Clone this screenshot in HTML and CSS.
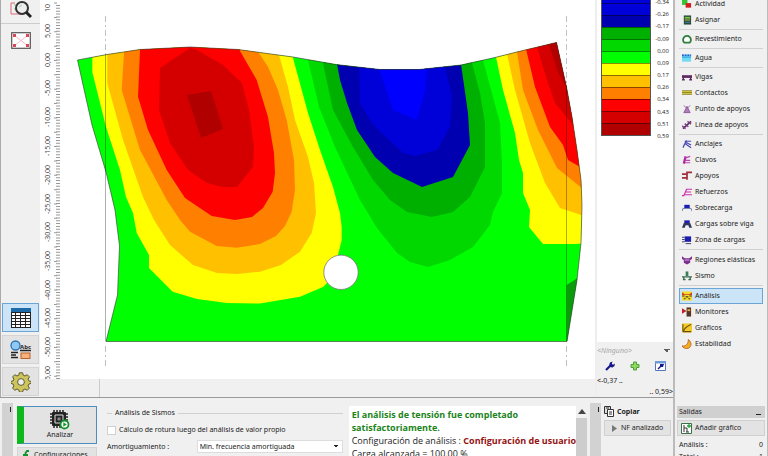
FILE: index.html
```html
<!DOCTYPE html>
<html lang="es">
<head>
<meta charset="utf-8">
<title>Análisis</title>
<link rel="stylesheet" href="styles.css">
</head>
<body>
<div class="app">
  <main class="main">
    <section class="workspace">
      <nav class="tools">
        <button class="tool" aria-label="Zoom">
          <svg width="22" height="20" viewBox="0 0 22 20"><path d="M5 3H1v11h13v-2" fill="none" stroke="#e06a78"/><path d="M4 5h4M4 9h4" stroke="#8fc79a"/><circle cx="12" cy="8" r="6" fill="#eee" stroke="#333" stroke-width="2"/><path d="M9 7l3-2" stroke="#9cc7a4"/><path d="M16 12l5 5" stroke="#222" stroke-width="3"/></svg>
        </button>
        <hr class="tool-line">
        <button class="tool" aria-label="Ajustar vista">
          <svg width="20" height="17" viewBox="0 0 20 17"><rect x=".7" y=".7" width="18.6" height="15.6" fill="#fff" stroke="#555" stroke-width="1.2"/><path d="M3 3l5 4M17 3l-5 4M3 14l5-4M17 14l-5-4M8 7l4 3M12 7l-4 3" stroke="#f0aab2" stroke-width=".8"/><path d="M2 2h3v3H2zM18 2h-3v3h3zM2 15h3v-3H2zM18 15h-3v-3h3z" fill="#d8485a"/></svg>
        </button>
        <div class="tool-tabs">
          <button class="tab tab-on" aria-label="Tabla">
            <svg width="20" height="20" viewBox="0 0 20 20"><path d="M0 0h20v20H0z" fill="#222"/><path d="M0 0h20v4H0z" fill="#1c6aa8"/><path d="M1 5h3v2H1zM5 5h4v2H5zM10 5h4v2h-4zM15 5h4v2h-4zM1 8h3v2H1zM5 8h4v2H5zM10 8h4v2h-4zM15 8h4v2h-4zM1 11h3v2H1zM5 11h4v2H5zM10 11h4v2h-4zM15 11h4v2h-4zM1 14h3v2H1zM5 14h4v2H5zM10 14h4v2h-4zM15 14h4v2h-4zM1 17h3v2H1zM5 17h4v2H5zM10 17h4v2h-4zM15 17h4v2h-4z" fill="#fff"/></svg>
          </button>
          <button class="tab" aria-label="Dibujo">
            <svg width="22" height="20" viewBox="0 0 22 20"><circle cx="5.500" cy="5.500" r="4.500" fill="#8fc8f4" stroke="#2a76b4" stroke-width="1.300"/><path d="M1 12.500h7M1 15h5M1 17.500h7M10 10.500h11" stroke="#222" stroke-width="1.500"/><rect x="11" y="13" width="9" height="5.500" fill="#f8b07c" stroke="#b5632a"/><text x="10" y="8.500" class="abc">Abc</text></svg>
          </button>
          <button class="tab" aria-label="Configuración">
            <svg width="20" height="20" viewBox="-10 -10 20 20"><path d="M-1.600-9.200h3.200l.6 2.400 1.800.8 2.200-1.300 2.200 2.200-1.300 2.200.8 1.800 2.400.6v1.800l-2.400.8-.8 1.800 1.300 2.200-2.200 2.200-2.200-1.300-1.800.8-.6 2.400h-3.200l-.6-2.400-1.800-.8-2.200 1.300-2.200-2.200 1.300-2.200-.8-1.800-2.400-.8v-1.800l2.400-.6.8-1.800-1.300-2.200 2.200-2.200 2.200 1.300 1.800-.8z" fill="#cdc45c" stroke="#5d5a2c"/><circle r="3.400" fill="#eee" stroke="#5d5a2c"/></svg>
          </button>
        </div>
      </nav>

      <div class="view">
        <svg class="plot" viewBox="40 0 555 379" role="img" aria-label="Isolíneas">
          <defs>
            <clipPath id="body"><path d="M77.500 60L107 54.500 140 49.500 190 47 238 49.500 293 57 336 64.500 380 69.500H419L461 65 495 57.500 525 50 556.500 42.500 566.500 87 572 117 577 150 581 180 582 205 581 243 577 280 567 341.500H106L117.500 295 119.500 246 115 210 106 172 92 125z"/></clipPath>
          </defs>
          <g class="ruler">
            <path d="M58 5V379" stroke-width="4" stroke-dasharray="1 1.870"/>
            <path d="M55.500 2.600V379" stroke-width="3" stroke-dasharray="1 13.350"/>
            <g class="marks">
              <text transform="translate(50 8) rotate(-90)">10</text>
              <text transform="translate(50 31) rotate(-90)">5,00</text>
              <text transform="translate(50 60) rotate(-90)">0,00</text>
              <text transform="translate(50 88) rotate(-90)">-5,00</text>
              <text transform="translate(50 117) rotate(-90)">-10,00</text>
              <text transform="translate(50 146) rotate(-90)">-15,00</text>
              <text transform="translate(50 175) rotate(-90)">-20,00</text>
              <text transform="translate(50 204) rotate(-90)">-25,00</text>
              <text transform="translate(50 232) rotate(-90)">-30,00</text>
              <text transform="translate(50 261) rotate(-90)">-35,00</text>
              <text transform="translate(50 290) rotate(-90)">-40,00</text>
              <text transform="translate(50 318) rotate(-90)">-45,00</text>
              <text transform="translate(50 347) rotate(-90)">-50,00</text>
              <text transform="translate(50 373) rotate(-90)">5,00</text>
            </g>
          </g>
          <g clip-path="url(#body)">
            <path d="M60 30H600V360H60z" fill="#00ff00"/>
            <path d="M92.300 40V72L106 127 120 170 126 197 133 213 136.700 233 149 255V268L172.700 291.700 197 299 227 303 260 303.500 300 296.700 323 287 338 272V255L341.700 240V227L340 213 333 187 320 150 308 113 293 58V40z" fill="#ffff00"/>
            <path d="M107.300 40V83L123 140 143 197 154 220 170 245 193 265 217 273 237 274 260 271.700 281 265 300 251.700 311.700 233 316 213 314 183 308 157 295 120 288 87 279 55V40z" fill="#ffc000"/>
            <path d="M124 40V53L121.700 90 140 150 166.700 200 180 220 190 231.700 216.700 246 236.700 247.700 260 244 276 236 285 226 291.700 211.700 295 190 294 160 286.700 120 278 90 268 66.700 258 51.700V40z" fill="#ff8000"/>
            <path d="M140 40V50L138 96.700 148 130 166.700 170 185 198 211.700 216 235 220 252 217 263 208 272.700 191.700 275 173 274 153 268 117 256.700 80 240 51V40z" fill="#ff0000"/>
            <path d="M190 48L160 68 159 110 170 143 188 170 207 183 222 187H237L253 167 254 147 249 110 242 83 223 65 197 50z" fill="#d40000"/>
            <path d="M187 95L211 91 223 129 201 138z" fill="#b00000"/>
            <path d="M308 40V60L319 107 335 147 360 200 377 228 397 253 410 262 428 267 450 260 473 247 490 225 493 212 502 193V163L500 123 483 60V40z" fill="#00d800"/>
            <path d="M323 40V63L333 110 353 147 373 180 390 200 407 212 432 217 453 212 470 197 485 167V123L480 93 472 63V40z" fill="#00b000"/>
            <path d="M337 40V64L340 80 347 103 357 130 375 157 393 173 422 187 453 177 470 145 468 113 461 64V40z" fill="#0000b0"/>
            <path d="M359 40L360 103 373 125 403 153 415 156 437 150 450 127 452 97 445 66V40z" fill="#0000d8"/>
            <path d="M379 40V69L393 110 417 120 425 90 427 69V40z" fill="#0000ff"/>
            <path d="M496 40V57L503 90 515 133 519 160 523 173V193L530 210 529 227 543 244H575L600 242V40z" fill="#ffff00"/>
            <path d="M507 40V54L515 90 530 143 545 183 560 208 600 221V40z" fill="#ffc000"/>
            <path d="M517 40V52L523 90 538 130 557 168 600 203V40z" fill="#ff8000"/>
            <path d="M526 40V49L535 87 550 127 563 145 568 160 600 178V40z" fill="#ff0000"/>
            <path d="M537 40V47L547 80 555 103 573 125 600 100V40z" fill="#d40000"/>
            <path d="M549 40V45L558 72 566 87 600 90V40z" fill="#b00000"/>
            <path d="M566.700 285L590 270V345H566.700z" fill="#0a9c0a"/>
          </g>
          <path class="outline" d="M77.500 60L107 54.500 140 49.500 190 47 238 49.500 293 57 336 64.500 380 69.500H419L461 65 495 57.500 525 50 556.500 42.500 566.500 87 572 117 577 150 581 180 582 205 581 243 577 280 567 341.500H106L117.500 295 119.500 246 115 210 106 172 92 125z"/>
          <path class="axis" d="M105.500 55V341M566.500 87V341"/>
          <path class="axis dash" d="M105.500 16V55M105.500 346V367M566.500 16V87M566.500 346V367"/>
          <circle cx="341" cy="272.300" r="17.200" fill="#fff" stroke="#777" stroke-width=".8"/>
        </svg>
        <div class="status"></div>
      </div>

      <aside class="legend">
        <div class="scale">
          <div class="colors">
            <i class="c-blue2"></i><i class="c-blue2"></i><i class="c-blue3"></i><i class="c-green3"></i><i class="c-green2"></i><i class="c-green1"></i><i class="c-yellow"></i><i class="c-gold"></i><i class="c-orange"></i><i class="c-red1"></i><i class="c-red2"></i><i class="c-red3"></i>
          </div>
          <div class="values">
            <span>-0,34</span><span>-0,26</span><span>-0,17</span><span>-0,09</span><span>0,00</span><span>0,09</span><span>0,17</span><span>0,26</span><span>0,34</span><span>0,43</span><span>0,51</span><span>0,59</span>
          </div>
        </div>
        <div class="range">
          <select class="preset" aria-label="Escala"><option>&lt;Ninguno&gt;</option></select>
          <div class="range-tools">
            <button aria-label="Ajustes"><svg width="10" height="10" viewBox="0 0 10 10"><path d="M1 9l4-4" stroke="#16168c" stroke-width="2.200"/><path d="M4 4.500L5 1.500 7.500.5 6.800 2.800 8 3.800 9.800 2.500 9.500 5 7.500 6.500 5 6z" fill="#16168c"/></svg></button>
            <button aria-label="Añadir"><svg width="10" height="10" viewBox="0 0 10 10"><path d="M3.500 1h3v2.500H9v3H6.500V9h-3V6.500H1v-3h2.500z" fill="#8fd860" stroke="#4ca038"/></svg></button>
            <button aria-label="Editar"><svg width="11" height="10" viewBox="0 0 11 10"><path d="M.5.500h10v9H.5z" fill="#fff" stroke="#5577b8"/><path d="M0 0h11v2.500H0z" fill="#6f9ad8"/><path d="M3 8l3-3" stroke="#16168c" stroke-width="1.500"/><path d="M5 3h4L8 6H5z" fill="#16168c"/></svg></button>
          </div>
          <span class="range-min">&lt;-0,37 ..</span>
          <span class="range-max">.. 0,59&gt;</span>
        </div>
      </aside>
    </section>

    <section class="dock">
      <div class="handle"></div>
      <div class="actions">
        <button class="run">
          <svg width="20" height="20" viewBox="0 0 20 20"><path d="M4 0v18M7 0v18M10 0v18M13 0v18M0 4h18M0 7h18M0 10h18M0 13h18" stroke="#222" stroke-width="1.500"/><rect x="2" y="2" width="14" height="14" rx="1" fill="#222"/><path d="M5 5h8v8H5z" fill="none" stroke="#ddd"/><path d="M7.500 7.500h3v3h-3z" fill="#888"/><circle cx="14.500" cy="14.500" r="4" fill="#fff" stroke="#15922c" stroke-width="1.800"/><path d="M13.300 12.200l3.500 2.300-3.500 2.300z" fill="#15922c"/></svg>
          <span>Analizar</span>
        </button>
        <button class="config"><svg width="6" height="10" viewBox="0 0 6 10"><path d="M6 1H4L2.500 3v6M0 5h5" fill="none" stroke="#15922c" stroke-width="1.800"/></svg><span>Configuraciones</span></button>
      </div>
      <fieldset class="quake">
        <legend>Análisis de Sismos</legend>
        <label class="check"><input type="checkbox"><span>Cálculo de rotura luego del análisis de valor propio</span></label>
        <div class="field">
          <label for="damp">Amortiguamiento :</label>
          <select id="damp"><option>Min. frecuencia amortiguada</option></select>
        </div>
      </fieldset>
      <div class="output">
        <div class="output-text">
          <p class="ok">El análisis de tensión fue completado satisfactoriamente.</p>
          <p class="line">Configuración de análisis : <b>Configuración de usuario</b></p>
          <p class="line">Carga alcanzada = 100,00 %</p>
        </div>
        <div class="bar"><svg width="8" height="5" viewBox="0 0 8 5"><path d="M4 0l4 5H0z" fill="#444"/></svg><i></i></div>
      </div>
      <div class="handle"></div>
      <div class="copy">
        <h2><svg width="10" height="11" viewBox="0 0 10 11"><path d="M.5.500h6v7h-6z" fill="#ddd" stroke="#333"/><path d="M3.500 3.500h6v7h-6z" fill="#fff" stroke="#333"/><path d="M2 2h3M5 6h3M5 8h3" stroke="#333"/></svg>Copiar</h2>
        <button class="nf"><svg width="5" height="7" viewBox="0 0 5 7"><path d="M0 0l5 3.500L0 7z" fill="#777"/></svg>NF analizado</button>
      </div>
    </section>
  </main>

  <aside class="side">
    <nav class="modes">
      <a href="#"><svg viewBox="0 0 11 10"><path d="M0 0h6v6H0z" fill="#35c435"/><path d="M4 4h6v5H4z" fill="#d31c1c"/></svg>Actividad</a>
      <a href="#"><svg viewBox="0 0 11 10"><path d="M2 0h8v10H2z" fill="#234a36"/><path d="M3 1.500h6v2H3z" fill="#7dc24a"/><path d="M3 5h6" stroke="#d7c53e"/><path d="M3 7.500h6" stroke="#4d87bc"/></svg>Asignar</a>
      <hr>
      <a href="#"><svg viewBox="0 0 11 10"><path d="M2.500 9A4.300 4.300 0 1 1 8.500 9z" fill="#fff" stroke="#2e7d3c" stroke-width="2"/></svg>Revestimiento</a>
      <hr>
      <a href="#"><svg viewBox="0 0 11 10"><path d="M0 1h10v8H0z" fill="#6fdcf4"/><path d="M0 2h10" stroke="#3355cc" stroke-width="1.500" stroke-dasharray="2 1"/><path d="M0 4h10" stroke="#2c8ce0"/></svg>Agua</a>
      <hr>
      <a href="#"><svg viewBox="0 0 11 10"><path d="M0 3h11v3H0z" fill="#5d2a62"/><path d="M1.500 5v3M9.500 5v3M0 8h3M8 8h3" stroke="#5d2a62" stroke-width="1.600"/></svg>Vigas</a>
      <a href="#"><svg viewBox="0 0 11 10"><path d="M0 2.500h11v4H0z" fill="#ddd046"/><path d="M0 4.500h11M0 2.500h11M0 6.500h11" stroke="#77701a" stroke-width=".8"/></svg>Contactos</a>
      <a href="#"><svg viewBox="0 0 11 10"><path d="M5.500 2L2 9h7zM2 1l3 3M9 1L6 4" fill="#b07cb8" stroke="#8a5094" stroke-width=".9"/></svg>Punto de apoyos</a>
      <a href="#"><svg viewBox="0 0 11 10"><path d="M1 9L10 1" stroke="#5d2a62" stroke-width="1.800"/><path d="M0 6l4 3M3 3.500L7 7M6 1l4 3" stroke="#7d4384" stroke-width="1.500"/></svg>Línea de apoyos</a>
      <hr>
      <a href="#"><svg viewBox="0 0 11 10"><path d="M1 9l4-8M4 5l6 4M4 3l6 3M3 2h7" fill="none" stroke="#4545b8" stroke-width="1.300"/></svg>Anclajes</a>
      <a href="#"><svg viewBox="0 0 11 10"><path d="M2 9L4 1" stroke="#a325a3" stroke-width="2.400"/><path d="M3 3l6-2M3 5.500h6M3 8h6" stroke="#c040b0" stroke-width="1.300"/></svg>Clavos</a>
      <a href="#"><svg viewBox="0 0 11 10"><path d="M5.500 9V1H11M0 3h5M0 7h5" fill="none" stroke="#a0303e" stroke-width="1.900"/></svg>Apoyos</a>
      <a href="#"><svg viewBox="0 0 11 10"><path d="M0 9h2l3-7h6M4 5h6M3 8h8" fill="none" stroke="#cc2faf" stroke-width="1.300"/></svg>Refuerzos</a>
      <a href="#"><svg viewBox="0 0 11 10"><path d="M2.500 1.500h6V5h-6z" fill="#1c1cb0"/><path d="M0 8.500l1-3h9l1 3" fill="none" stroke="#6b75a8"/></svg>Sobrecarga</a>
      <a href="#"><svg viewBox="0 0 11 10"><path d="M2.500 1h6v3h-6z" fill="#1c1cb0"/><path d="M0 9l2-5h7l2 5H8L7 6.500H4L3 9z" fill="#33355c"/></svg>Cargas sobre viga</a>
      <a href="#"><svg viewBox="0 0 11 10"><path d="M3 1h7v6H3z" fill="#1c1cb0"/><path d="M0 2h3M0 4.500h3M0 7h3M4 9h6" stroke="#33355c"/></svg>Zona de cargas</a>
      <hr class="wide">
      <a href="#"><svg viewBox="0 0 11 10"><path d="M0 1l3 2h5l3-2v3L9 5v3L5.500 10 2 8V5L0 4z" fill="#7c3190"/><path d="M3 5h5" stroke="#e4b5ec"/></svg>Regiones elásticas</a>
      <a href="#"><svg viewBox="0 0 11 10"><path d="M4 0h3v5H4z" fill="#3b7d55"/><path d="M0 6h11M1 9h3M7 9h3M2 6v3M9 6v3" stroke="#3b6a4c" stroke-width="1.500"/></svg>Sismo</a>
      <hr class="wide">
      <a href="#" class="on"><svg viewBox="0 0 11 10"><path d="M0 0h11v10H0z" fill="#f3dc2e"/><path d="M0 1l3 2h5l3-2v3H0z" fill="#d43f1e"/><path d="M0 5h3M8 5h3M2 8h2M7 8h2M4 6h3" stroke="#4b3418" stroke-width="1.300"/></svg>Análisis</a>
      <a href="#"><svg viewBox="0 0 11 10"><path d="M0 1l5 3-5 3z" fill="#c02222"/><path d="M5 0h5v10H5z" fill="#55352a"/><path d="M6 2h3v2H6z" fill="#e4b23c"/></svg>Monitores</a>
      <a href="#"><svg viewBox="0 0 11 10"><path d="M0 0h11v10H0z" fill="#f0c92c"/><path d="M1 9V1M1 9h9M2 8C3 4 6 3 10 1" fill="none" stroke="#6e4f0c" stroke-width="1.200"/></svg>Gráficos</a>
      <a href="#"><svg viewBox="0 0 11 10"><path d="M7 0c5 4 3 10-2 10C3 10 1 9 0 7c4 1 7-2 7-7z" fill="#f2ae22" stroke="#b34c14" stroke-width=".8"/></svg>Estabilidad</a>
    </nav>
    <section class="outs">
      <h2>Salidas<i></i></h2>
      <button class="add"><svg width="11" height="11" viewBox="0 0 11 11"><path d="M.5.500h10v10H.5z" fill="#fff" stroke="#3b7148"/><path d="M3 2v7M3 5h3v4M5 9h3" fill="none" stroke="#333"/><path d="M8 1v4M6 3h4" stroke="#28a038" stroke-width="1.300"/></svg>Añadir gráfico</button>
      <dl><dt>Análisis :</dt><dd>0</dd><dt>Total :</dt><dd>1</dd></dl>
    </section>
  </aside>
</div>
</body>
</html>
```
FILE: styles.css
```css
* { box-sizing: border-box; }

body {
  margin: 0;
  background: #f0f0f0;
  color: #222;
  font: 7px/10px "Noto Sans", "Open Sans", sans-serif;
}

button, select, input {
  margin: 0;
  padding: 0;
  border: 0;
  background: none;
  color: inherit;
  font: inherit;
}

h2, p, dl, dd { margin: 0; font-size: inherit; }
svg { display: block; flex: none; }

.app {
  display: grid;
  grid-template-columns: minmax(0, 1fr) 95px;
  height: 100vh;
  overflow: hidden;
}

.main {
  display: grid;
  grid-template-rows: minmax(0, 1fr) 59px;
  min-height: 0;
}

.workspace {
  display: grid;
  grid-template-columns: 40px minmax(0, 1fr) 78px;
  min-height: 0;
}

/* left tools */
.tools {
  display: flex;
  flex-direction: column;
  border-left: 1px solid #aaa;
}
.tool { display: grid; place-items: center; height: 18px; }
.tool-line {
  width: 100%;
  margin: 5px 0 7px;
  border: 0;
  border-top: 1px solid #ccc;
}
.tool-tabs {
  display: flex;
  flex-direction: column;
  gap: 3px;
  margin: auto 1px 1px;
}
.tab {
  display: grid;
  place-items: center;
  height: 29px;
  border: 1px solid #d4d4d4;
  background: #e3e3e3;
}
.tab-on { border-color: #6aa5d6; background: #cce4f7; }
.abc { font: bold 6px "Open Sans", sans-serif; fill: #222; }

/* drawing area */
.view {
  display: grid;
  grid-template-rows: minmax(0, 1fr) 18px;
  min-height: 0;
}
.plot { width: 100%; height: 100%; background: #fff; }
.status { margin-left: 59px; border-left: 1px solid #ccc; }
.ruler path { fill: none; stroke: #999; }
.marks text {
  font: 7px "Open Sans", sans-serif;
  fill: #444;
  text-anchor: middle;
}
.outline { fill: none; stroke: #333; stroke-width: 0.6; }
.axis { fill: none; stroke: #000; stroke-opacity: 0.45; stroke-width: 0.7; }
.dash { stroke-opacity: 0.35; stroke-dasharray: 6 3 2 3; }

/* legend */
.legend {
  display: flex;
  flex-direction: column;
  justify-content: space-between;
  border-left: 2px solid #eee;
  background: #fff;
}
.scale { display: flex; gap: 1px; padding: 0 4px; }
.colors {
  display: grid;
  grid-auto-rows: 1fr;
  flex: 0 0 50px;
  height: 146px;
  margin-top: -10px;
  border: 1px solid #555;
}
.colors i + i { border-top: 1px solid rgb(0 0 0 / 45%); }
.values {
  display: grid;
  grid-auto-rows: 1fr;
  flex: 1;
  height: 146px;
  margin-top: -4px;
  align-items: center;
  font: 6px/10px "Open Sans", sans-serif;
  text-align: right;
}
.c-blue2 { background: #0000d8; }
.c-blue3 { background: #0000b0; }
.c-green3 { background: #00b000; }
.c-green2 { background: #00d800; }
.c-green1 { background: #00ff00; }
.c-yellow { background: #ffff00; }
.c-gold { background: #ffc000; }
.c-orange { background: #ff8000; }
.c-red1 { background: #ff0000; }
.c-red2 { background: #d40000; }
.c-red3 { background: #b00000; }

.range {
  display: flex;
  flex-direction: column;
  padding: 3px 0 0;
  background: #f0f0f0;
}
.preset, .field select {
  appearance: none;
  background-image:
    linear-gradient(to top left, transparent 50%, #222 50%),
    linear-gradient(to top right, transparent 50%, #222 50%);
  background-image:
    linear-gradient(to bottom right, #222 50%, transparent 50%),
    linear-gradient(to bottom left, #222 50%, transparent 50%);
  background-position: right 3px center, right 6px center;
  background-repeat: no-repeat;
  background-size: 3px 3px;
}
.preset { height: 11px; color: #888; font-style: italic; opacity: 0.7; }
.range-tools {
  display: flex;
  justify-content: space-between;
  padding: 5px 7px 4px 8px;
}
.range-min { line-height: 11px; }
.range-max { line-height: 11px; text-align: right; }

/* bottom dock */
.dock {
  display: flex;
  min-height: 0;
  overflow: hidden;
  border-top: 1px solid #999;
}
.handle {
  flex: 0 0 11px;
  margin: 5px 0 0 2px;
  padding: 4px 0 0 8px;
  background: #d2d2d2;
}
.handle::before {
  content: "";
  display: block;
  width: 1px;
  height: 5px;
  background: #222;
}
.actions {
  display: flex;
  flex-direction: column;
  flex: 0 0 80px;
  gap: 3px;
  margin: 8px 0 0 4px;
}
.run {
  display: flex;
  flex-direction: column;
  align-items: center;
  flex: none;
  height: 38px;
  padding: 3px 0 0;
  border: 1px solid #4a8fc0;
  border-left: 7px solid #0cb81c;
  background: #e3e3e3;
  line-height: 10px;
}
.config {
  display: flex;
  align-items: center;
  flex: none;
  gap: 5px;
  height: 16px;
  padding-left: 5px;
  border: 1px solid #d4d4d4;
  background: #e3e3e3;
}
.quake {
  flex: 1 1 0;
  min-width: 0;
  margin: 10px 7px 0 10px;
  padding: 0;
  border: 0;
}
.quake legend {
  display: flex;
  align-items: center;
  gap: 3px;
  width: 100%;
  padding: 0;
}
.quake legend::before, .quake legend::after {
  content: "";
  width: 5px;
  border-top: 1px solid #d0d0d0;
}
.quake legend::after { flex: 1; }
.check { display: flex; align-items: center; gap: 3px; margin-top: 7px; }
.check input {
  appearance: none;
  width: 9px;
  height: 9px;
  border: 1px solid #d0d0d0;
  background: #fff;
}
.field { display: flex; align-items: center; margin-top: 5px; }
.field label { flex: 1; }
.field select {
  flex: 0 0 146px;
  height: 13px;
  padding-left: 2px;
  border: 1px solid #ddd;
  background-color: #fff;
}
.output {
  display: flex;
  flex: 0 0 238px;
  margin: 8px 1px 0 -1px;
  font: 9px/13px "Open Sans", "Noto Sans", sans-serif;
}
.output-text { flex: 1; min-width: 0; padding: 2px 0 2px 3px; background: #fff; }
.ok { padding-right: 8px; color: #1a841a; font-weight: bold; }
.line { white-space: nowrap; }
.output b { color: #941212; }
.bar {
  display: flex;
  flex-direction: column;
  align-items: center;
  gap: 4px;
  width: 11px;
  padding-top: 3px;
}
.bar i { flex: 1; width: 100%; background: #cdcdcd; }
.copy { flex: 0 0 72px; padding: 8px 2px 0 3px; }
.copy h2 {
  display: flex;
  align-items: center;
  gap: 3px;
  height: 11px;
}
.nf, .add {
  display: flex;
  align-items: center;
  width: 100%;
  height: 16px;
  border: 1px solid #d0d0d0;
  background: #e3e3e3;
}
.nf { gap: 4px; margin-top: 3px; padding-left: 7px; }

/* right sidebar */
.side {
  display: grid;
  grid-template-rows: minmax(0, 1fr) 50px;
  min-height: 0;
  overflow: hidden;
  border-left: 2px solid #bbb;
  border-right: 1px solid #bbb;
}
.modes {
  display: flex;
  flex-direction: column;
  margin: -4px 4px 0;
}
.modes a {
  display: flex;
  align-items: center;
  gap: 3px;
  height: 16px;
  padding-left: 2px;
  border: 1px solid transparent;
  color: inherit;
  text-decoration: none;
  white-space: nowrap;
}
.modes a.on { border-color: #6aa5d6; background: #cce4f7; }
.modes svg { width: 10px; height: 10px; }
.modes hr {
  width: 100%;
  margin: 1px 0;
  border: 0;
  border-top: 1px solid #d0d0d0;
}
.modes hr.wide { margin-bottom: 2px; }
.outs { padding: 0 2px; }
.outs h2 {
  display: flex;
  align-items: center;
  justify-content: space-between;
  height: 12px;
  padding: 0 4px 0 2px;
  background: #d0d0d0;
  font-weight: normal;
}
.outs h2 i { width: 5px; margin-top: 5px; border-top: 1px solid #222; }
.add { gap: 3px; margin-top: 2px; padding-left: 3px; }
.outs dl {
  display: grid;
  grid-template-columns: 1fr auto;
  row-gap: 2px;
  padding: 4px 2px 0;
}
```
